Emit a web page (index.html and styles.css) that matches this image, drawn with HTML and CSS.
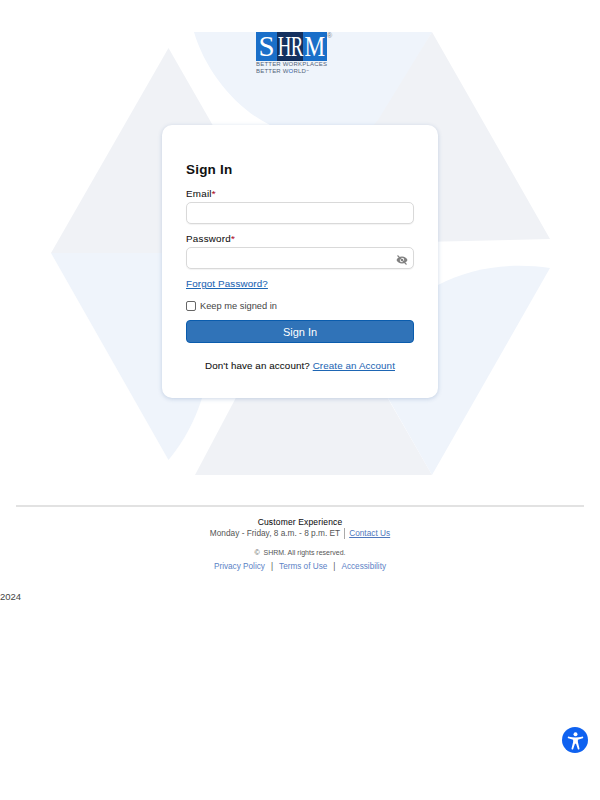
FILE: index.html
```html
<!DOCTYPE html>
<html lang="en">
<head>
<meta charset="utf-8">
<title>Sign In</title>
<link rel="stylesheet" href="styles.css">
</head>
<body>
<main class="hero">
  <svg class="hero-bg" width="600" height="476" viewBox="0 0 600 476" aria-hidden="true">
    <path class="bg-grey" d="M168.500 48 L51 253 H286 Z"/>
    <path class="bg-blue" d="M194 32 H432 L378 125 L300 150 L270 125 C235 108 205 70 194 32 Z"/>
    <path class="bg-grey" d="M432 32 L550 239 L378 243 L360 140 L378 120 Z"/>
    <path class="bg-blue" d="M51 253 H240 V360 L202 398 C195 420 185 440 168.500 460 Z"/>
    <path class="bg-grey" d="M240 390 H383 L432 475 H195 Z"/>
    <path class="bg-blue" d="M550 268 L432 475 L388 398 L360 340 L420 295 L438 285 C470 268 510 262 550 268 Z"/>
  </svg>
  <div class="logo">
    <div class="logo-mark">
      <span class="logo-s">S</span>
      <span class="logo-hr"><span class="logo-hr-text">HR</span></span>
      <span class="logo-m"><span class="logo-m-text">M</span></span>
      <span class="logo-reg">®</span>
    </div>
    <div class="logo-tag">BETTER WORKPLACES</div>
    <div class="logo-tag">BETTER W<span class="logo-o">O</span>RLD<span class="logo-tm">™</span></div>
  </div>
  <section class="card">
    <h1 class="title">Sign In</h1>
    <label class="field-label" for="email">Email<span class="req">*</span></label>
    <input class="input" id="email" type="text">
    <label class="field-label" for="password">Password<span class="req">*</span></label>
    <div class="input-wrap">
      <input class="input" id="password" type="password">
      <svg class="eye" width="12" height="12" viewBox="0 0 24 24" aria-hidden="true">
        <path fill="#808080" d="M12 5C7 5 2.700 8 1 12c1.700 4 6 7 11 7s9.300-3 11-7c-1.700-4-6-7-11-7zm0 11.500a4.500 4.500 0 1 1 0-9 4.500 4.500 0 0 1 0 9z"/>
        <circle cx="12" cy="12" r="2.600" fill="#808080"/>
        <path stroke="#808080" stroke-width="2.200" d="M3 3l18 18"/>
      </svg>
    </div>
    <a class="forgot" href="#">Forgot Password?</a>
    <label class="keep"><span class="check"></span><span>Keep me signed in</span></label>
    <button class="submit" type="button">Sign In</button>
    <p class="create">Don't have an account? <a href="#">Create an Account</a></p>
  </section>
</main>
<footer class="footer">
  <div class="foot-title">Customer Experience</div>
  <div class="foot-hours"><span>Monday - Friday, 8 a.m. - 8 p.m. ET</span><span class="foot-bar"></span><a href="#">Contact Us</a></div>
  <div class="foot-copy">©&nbsp; SHRM. All rights reserved.</div>
  <div class="foot-links"><a href="#">Privacy Policy</a><span>|</span><a href="#">Terms of Use</a><span>|</span><a href="#">Accessibility</a></div>
</footer>
<div class="year">2024</div>
<button class="a11y" type="button" aria-label="Accessibility">
  <svg width="19" height="19" viewBox="0 0 24 24" aria-hidden="true">
    <circle cx="12" cy="4" r="2.500" fill="#fff"/>
    <path fill="#fff" d="M2.500 7.500 C2 8 2.200 9 3 9.300 L9 11 V14 L7 22 C6.800 23.400 8.600 23.800 9.100 22.600 L11.300 16 H12.700 L14.900 22.600 C15.400 23.800 17.200 23.400 17 22 L15 14 V11 L21 9.300 C21.800 9 22 8 21.500 7.500 C21 7 20.500 7 20 7.200 C15 8.500 9 8.500 4 7.200 C3.500 7 3 7 2.500 7.500 Z"/>
  </svg>
</button>
</body>
</html>
```

FILE: styles.css
```css
* { box-sizing: border-box; }
html, body { margin: 0; background: #fff; }
body { font-family: "Liberation Sans", Arial, sans-serif; color: #111; height: 800px; overflow: hidden; position: relative; }

.hero { position: relative; height: 476px; padding-top: 32px; }
.hero-bg { position: absolute; left: 0; top: 0; }
.bg-grey { fill: #f0f2f6; }
.bg-blue { fill: #eff4fb; }

.logo { position: relative; width: 71px; margin: 0 0 0 256px; height: 93px; }
.logo-mark { position: relative; display: flex; height: 29px; width: 71px; font-family: "Liberation Serif", serif; color: #fff; font-size: 29px; line-height: 29px; }
.logo-s { width: 21px; background: #1a6fc9; text-align: center; }
.logo-hr { width: 26px; background: #14315f; display: flex; justify-content: center; }
.logo-hr-text { display: block; transform: scaleX(.65); letter-spacing: -1px; }
.logo-m { width: 24px; background: #1a6fc9; display: flex; justify-content: center; }
.logo-m-text { display: block; transform: scaleX(.8); }
.logo-reg { position: absolute; left: 71px; top: 0; font: 7px/7px "Liberation Sans", sans-serif; color: #888; }
.logo-tag { font-size: 6px; line-height: 6.500px; letter-spacing: .2px; color: #55647a; white-space: nowrap; }
.logo-tag:first-of-type { margin-top: 3px; }
.logo-o { color: #1a5fc0; }
.logo-tm { font-size: 3px; vertical-align: top; }

.card { position: relative; width: 276px; height: 273px; margin: 0 0 0 162px; padding: 36px 24px 0; background: #fff; border-radius: 10px; box-shadow: 0 1px 4px rgba(60, 100, 160, .25); }
.title { margin: 0; font-size: 13.500px; line-height: 18px; font-weight: 700; letter-spacing: .2px; color: #111; }
.field-label { display: block; margin-top: 9px; font-size: 9.800px; line-height: 12px; letter-spacing: .25px; color: #111; -webkit-text-stroke: .06px #111; }
.req { color: #d0021b; }
.input { display: block; width: 228px; height: 22px; margin-top: 2px; border: 1px solid #d9d9d9; border-radius: 5px; background: #fff; box-shadow: 0 1px 1px rgba(0, 0, 0, .05); outline: 0; }
.input-wrap { position: relative; }
.eye { position: absolute; right: 6px; top: 7px; }
.forgot { display: block; margin-top: 9px; font-size: 9.800px; line-height: 12px; letter-spacing: .15px; color: #1e66b4; -webkit-text-stroke: .08px #1e66b4; }
.keep { display: flex; align-items: center; gap: 4px; margin-top: 10px; font-size: 9.300px; line-height: 12px; color: #444; }
.check { width: 10px; height: 10px; border: 1px solid #666; border-radius: 2px; background: #fff; }
.submit { display: block; width: 228px; height: 23px; margin-top: 8px; border: 1px solid #0a5cad; border-radius: 4px; background: #3073b8; color: #fff; font: 11px/20px "Liberation Sans", sans-serif; padding: 0; }
.create { margin: 17px 0 0; text-align: center; font-size: 9.800px; line-height: 12px; letter-spacing: .1px; color: #111; -webkit-text-stroke: .08px #111; }
.create a { color: #1e66b4; -webkit-text-stroke: .04px #1e66b4; }

.footer { margin: 29px 16px 0; border-top: 2px solid #e2e2e2; padding-top: 10px; text-align: center; font-size: 8.200px; color: #555; }
.foot-title { font-size: 8.500px; line-height: 11px; letter-spacing: .15px; color: #111; -webkit-text-stroke: .06px #111; }
.foot-hours { display: flex; justify-content: center; align-items: center; line-height: 11px; font-size: 8.300px; }
.foot-bar { width: 1px; height: 11px; margin: 0 4px; background: #aaa; }
.foot-hours a { color: #4f78bd; }
.foot-copy { margin-top: 9px; font-size: 7px; line-height: 10px; color: #555; }
.foot-links { display: flex; justify-content: center; gap: 6px; margin-top: 3px; line-height: 12px; }
.foot-links a { color: #5b82c6; text-decoration: none; }

.year { margin-top: 18px; font-size: 9.500px; line-height: 12px; color: #444; }
.a11y { position: absolute; left: 562px; top: 727px; width: 26px; height: 26px; padding: 0; border: 0; border-radius: 50%; background: #0f62f0; display: flex; align-items: center; justify-content: center; }
```
